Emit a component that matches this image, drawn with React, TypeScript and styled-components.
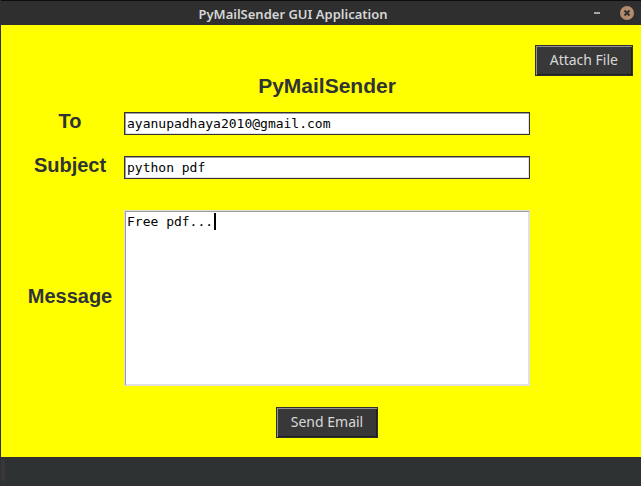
import React, { useState } from "react";
import styled, { createGlobalStyle } from "styled-components";

const GlobalStyle = createGlobalStyle`
  *, *::before, *::after { box-sizing: border-box; }
  body { margin: 0; background: #2e3233; }
`;

const Window = styled.div`
  display: flex;
  flex-direction: column;
  min-height: 100vh;
  border-left: 1px solid #303030;
`;

const TitleBar = styled.header`
  display: grid;
  grid-template-columns: 56px 1fr 56px;
  align-items: center;
  height: 25px;
  border-top: 1px solid #0e0e10;
  background: #2f2f2f;
`;

const WindowTitle = styled.span`
  grid-column: 2;
  padding-right: 56px;
  padding-top: 2px;
  text-align: center;
  white-space: nowrap;
  color: #d6d6d6;
  font: 600 13px/20px "Noto Sans", sans-serif;
`;

const WindowControls = styled.div`
  display: flex;
  align-items: center;
  justify-content: flex-end;
  gap: 20px;
  padding-right: 7px;
`;

const ControlButton = styled.button`
  display: flex;
  padding: 0;
  border: 0;
  background: none;
`;

const Form = styled.form`
  display: grid;
  flex: 1;
  grid-template-columns: 123px minmax(0, 1fr) 111px;
  grid-template-rows: 53px auto;
  align-content: start;
  padding-top: 20px;
  background: #ffff00;
`;

const Heading = styled.h1`
  grid-column: 2;
  align-self: end;
  margin: 0;
  text-align: center;
  color: #303336;
  font: bold 21px/24px "Liberation Sans", Arial, sans-serif;
`;

const Fields = styled.div`
  display: grid;
  grid-column: 1 / -1;
  grid-template-columns: subgrid;
  row-gap: 21px;
  padding-top: 14px;
`;

const Label = styled.label`
  grid-column: 1;
  align-self: center;
  padding: 0 0 5px 15px;
  text-align: center;
  color: #303336;
  font: bold 20px/18px "Liberation Sans", Arial, sans-serif;
`;

const TextInput = styled.input`
  grid-column: 2;
  width: 100%;
  height: 23px;
  padding: 0 2px;
  border: 1px solid #353337;
  border-radius: 0;
  outline: 0;
  background: #fff;
  box-shadow: inset 1px 1px #a0a0a0, inset -1px -1px #e2e2e2;
  color: #000;
  font: 13px/19px "DejaVu Sans Mono", monospace;
`;

const MessageRow = styled.div`
  display: grid;
  grid-column: 1 / -1;
  grid-template-columns: subgrid;
  margin-top: 10px;
`;

const Editor = styled.div`
  position: relative;
  grid-column: 2;
  font: 13px/17px "DejaVu Sans Mono", monospace;
`;

const MessageInput = styled.textarea`
  display: block;
  width: 100%;
  height: 176px;
  padding: 2px;
  border: 1px solid #dedede;
  border-radius: 0;
  outline: 0;
  resize: none;
  background: #fff;
  box-shadow: inset 1px 1px #9c9c9c, inset -1px -1px #e2e2e2;
  color: #000;
  font: inherit;
`;

const Caret = styled.span`
  position: absolute;
  top: 3px;
  left: calc(4px + 11ch);
  width: 2px;
  height: 17px;
  background: #000;
`;

const Button = styled.button`
  height: 31px;
  padding: 0 14px 2px;
  border: 1px solid #303030;
  border-radius: 0;
  background: #383838;
  box-shadow: inset 1px 1px #929292, inset -1px -1px #1e1e1e;
  color: #d8d8d8;
  white-space: nowrap;
  font: 14px/20px "Noto Sans", sans-serif;
`;

const AttachButton = styled(Button)`
  grid-column: 3;
  align-self: start;
  justify-self: end;
  margin-right: 8px;
`;

const SendButton = styled(Button)`
  grid-column: 2;
  justify-self: center;
`;

const Footer = styled.footer`
  height: 29px;
  padding: 3px 0 4px;
  border-bottom: 1px solid #353035;
  background: #2e3233;
`;

const Grip = styled.div`
  width: 4px;
  height: 21px;
  background: #383838;
`;

export default function App() {
  const [to, setTo] = useState("ayanupadhaya2010@gmail.com");
  const [subject, setSubject] = useState("python pdf");
  const [message, setMessage] = useState("Free pdf...");

  return (
    <Window>
      <GlobalStyle />
      <TitleBar>
        <WindowTitle>PyMailSender GUI Application</WindowTitle>
        <WindowControls>
          <ControlButton type="button" aria-label="Minimize">
            <svg width="6" height="14" viewBox="0 0 6 14">
              <rect y="6" width="6" height="2" fill="#a5a5a5" />
            </svg>
          </ControlButton>
          <ControlButton type="button" aria-label="Close">
            <svg width="14" height="14" viewBox="0 0 14 14">
              <circle cx="7" cy="7" r="7" fill="#b38b6d" />
              <path d="M4.5 4.5l5 5M9.5 4.5l-5 5" stroke="#2f2f2f" strokeWidth="2" />
            </svg>
          </ControlButton>
        </WindowControls>
      </TitleBar>
      <Form onSubmit={(event) => event.preventDefault()}>
        <Heading>PyMailSender</Heading>
        <AttachButton type="button">Attach File</AttachButton>
        <Fields>
          <Label htmlFor="to">To</Label>
          <TextInput id="to" value={to} spellCheck={false} onChange={(e) => setTo(e.target.value)} />
          <Label htmlFor="subject">Subject</Label>
          <TextInput id="subject" value={subject} spellCheck={false} onChange={(e) => setSubject(e.target.value)} />
          <MessageRow>
            <Label htmlFor="message">Message</Label>
            <Editor>
              <MessageInput
                id="message"
                value={message}
                spellCheck={false}
                onChange={(e) => setMessage(e.target.value)}
              />
              <Caret />
            </Editor>
          </MessageRow>
          <SendButton type="submit">Send Email</SendButton>
        </Fields>
      </Form>
      <Footer>
        <Grip />
      </Footer>
    </Window>
  );
}
